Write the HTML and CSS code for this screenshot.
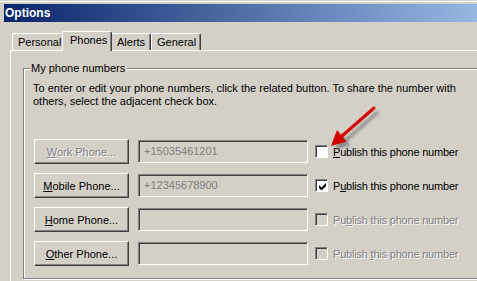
FILE: index.html
```html
<!DOCTYPE html>
<html lang="en">
<head>
    <meta charset="UTF-8">
    <title>Options</title>
    <link rel="stylesheet" href="styles.css">
</head>
<body>
    <div class="window">
        <div class="titlebar">Options</div>

        <!-- Tab strip -->
        <div class="tabs">
            <div class="tab tab-personal">Personal</div>
            <div class="tab tab-phones active">Phones</div>
            <div class="tab tab-alerts">Alerts</div>
            <div class="tab tab-general">General</div>
        </div>

        <div class="panel">
            <div class="group">
                <div class="group-title">My phone numbers</div>
                <p class="intro">To enter or edit your phone numbers, click the related button. To share the number with others, select the adjacent check box.</p>

                <div class="row">
                    <button class="btn" disabled><span class="ul">W</span>ork Phone...</button>
                    <div class="field">+15035461201</div>
                    <span class="check"></span>
                    <span class="label"><span class="ul">P</span>ublish this phone number</span>
                </div>
                <div class="row">
                    <button class="btn"><span class="ul">M</span>obile Phone...</button>
                    <div class="field">+12345678900</div>
                    <span class="check checked">
                        <svg width="7" height="7" viewBox="0 0 7 7"><path d="M0 2v3l2 2h1l4-4V0L2.5 4.5z" fill="#000"/></svg>
                    </span>
                    <span class="label">P<span class="ul">u</span>blish this phone number</span>
                </div>
                <div class="row">
                    <button class="btn"><span class="ul">H</span>ome Phone...</button>
                    <div class="field"></div>
                    <span class="check disabled"></span>
                    <span class="label disabled">Pu<span class="ul">b</span>lish this phone number</span>
                </div>
                <div class="row">
                    <button class="btn"><span class="ul">O</span>ther Phone...</button>
                    <div class="field"></div>
                    <span class="check disabled"></span>
                    <span class="label disabled">Publish <span class="ul">t</span>his phone number</span>
                </div>
            </div>
        </div>
    </div>

    <!-- Callout arrow pointing at the first check box -->
    <svg class="arrow" width="90" height="70" viewBox="0 0 90 70">
        <defs>
            <filter id="soft" x="-20%" y="-20%" width="140%" height="140%">
                <feGaussianBlur stdDeviation="1.6"/>
            </filter>
        </defs>
        <g transform="translate(4 4)" fill="#555" stroke="#555" opacity="0.55" filter="url(#soft)">
            <line x1="74" y1="8" x2="42" y2="36" stroke-width="3"/>
            <polygon points="31,46 46.5,41.5 37,30" stroke="none"/>
        </g>
        <g fill="#d40000" stroke="#d40000">
            <line x1="74" y1="8" x2="42" y2="36" stroke-width="3" stroke-linecap="round"/>
            <polygon points="31,46 46.5,41.5 37,30" stroke="none"/>
        </g>
    </svg>
</body>
</html>
```

FILE: styles.css
```css
:root {
    --face: #d4d0c8;
    --shadow: #808080;
    --dark: #404040;
    --light: #fff;
}

* {
    box-sizing: border-box;
}

body {
    margin: 0;
    width: 477px;
    height: 281px;
    overflow: hidden;
    background-color: var(--face);
    font-family: "Liberation Sans", Arial, sans-serif;
    font-size: 11px;
    color: #000;
    position: relative;
}

.window {
    padding: 3px 0 0 4px;
    border-top: 1px solid var(--face);
    box-shadow: inset 0 1px 0 var(--light);
}

.titlebar {
    height: 18px;
    padding: 2px 0 0 1px;
    background: linear-gradient(to right, #0a246a, #97b8e2);
    color: #fff;
    font-weight: bold;
    font-size: 12px;
    line-height: 15px;
}

/* Tabs */
.tabs {
    display: flex;
    align-items: flex-end;
    height: 28px;
    padding-left: 8px;
}

.tab {
    height: 17px;
    padding-top: 2px;
    border-top: 1px solid var(--light);
    border-left: 1px solid var(--light);
    border-right: 1px solid var(--dark);
    box-shadow: inset -1px 0 0 var(--shadow);
    border-radius: 2px 2px 0 0;
    line-height: 13px;
}

.tab-personal { width: 52px; padding-left: 5px; }
.tab-alerts { width: 40px; padding-left: 5px; }
.tab-general { width: 50px; padding-left: 5px; }

.tab.active {
    width: 50px;
    height: 20px;
    margin: 0 -1px -1px -2px;
    padding: 2px 0 0 7px;
    background-color: var(--face);
    position: relative;
    z-index: 1;
}

.panel {
    margin-left: 6px;
    padding: 17px 0 0 12px;
    height: 240px;
    border-top: 1px solid var(--light);
    border-left: 1px solid var(--light);
}

/* Group box (etched frame) */
.group {
    width: 480px;
    height: 211px;
    padding: 0 0 0 10px;
    border: 1px solid var(--shadow);
    box-shadow: inset 1px 1px 0 var(--light), 1px 1px 0 var(--light);
}

.group-title {
    width: max-content;
    margin: -7px 0 0 -4px;
    padding: 0 2px 0 1px;
    line-height: 13px;
    background-color: var(--face);
}

.intro {
    margin: 7px 0 31px -1px;
    width: 432px;
    line-height: 13px;
}

.row {
    display: flex;
    align-items: center;
    height: 25px;
    margin-bottom: 9px;
}

.btn {
    width: 95px;
    height: 25px;
    margin: 0 9px 0 0;
    padding: 0;
    background-color: var(--face);
    font: inherit;
    color: #000;
    border: 1px solid;
    border-color: var(--light) var(--dark) var(--dark) var(--light);
    box-shadow: inset -1px -1px 0 var(--shadow);
}

.btn:disabled {
    color: var(--shadow);
    text-shadow: 1px 1px 0 var(--light);
}

.ul {
    text-decoration: underline;
}

.field {
    width: 170px;
    height: 23px;
    margin-right: 7px;
    padding: 3px 0 0 5px;
    border: 1px solid;
    border-color: var(--shadow) var(--light) var(--light) var(--shadow);
    box-shadow: inset 1px 1px 0 var(--dark);
    color: var(--shadow);
    line-height: 15px;
}

.check {
    width: 13px;
    height: 13px;
    margin-right: 5px;
    border: 1px solid;
    border-color: var(--shadow) var(--light) var(--light) var(--shadow);
    box-shadow: inset 1px 1px 0 var(--dark);
    background-color: #fff;
    display: flex;
    align-items: center;
    justify-content: center;
    padding: 1px 0 0 1px;
}

.check.disabled {
    background-color: var(--face);
}

.label {
    letter-spacing: -0.2px;
}

.label.disabled {
    color: var(--shadow);
    text-shadow: 1px 1px 0 var(--light);
}

.arrow {
    position: absolute;
    left: 300px;
    top: 100px;
}
```
